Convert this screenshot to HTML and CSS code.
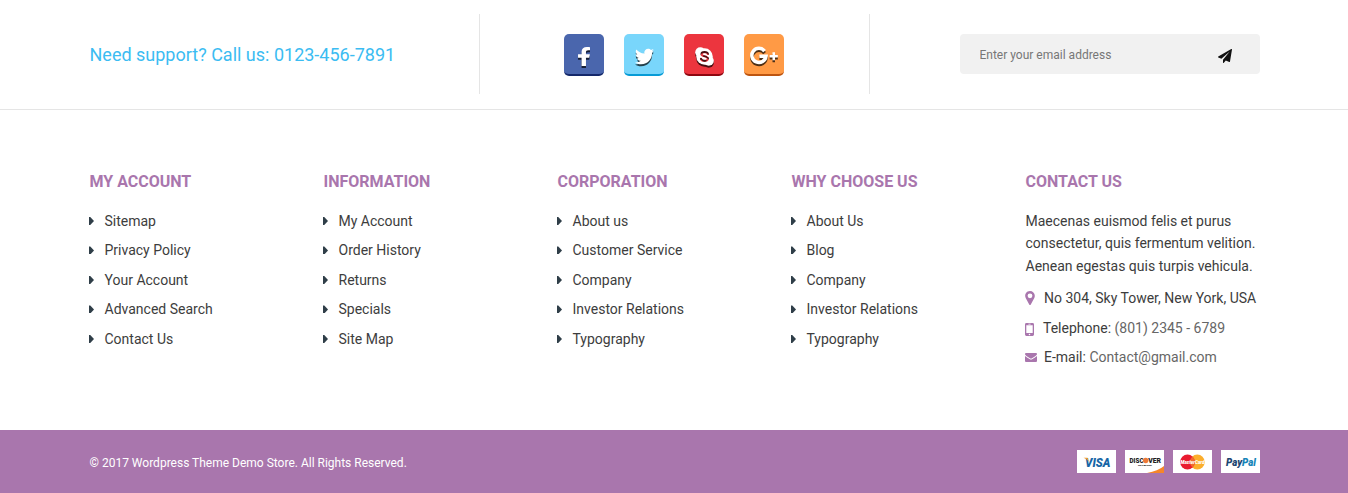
FILE: index.html
```html
<!DOCTYPE html>
<html lang="en">
<head>
<meta charset="utf-8">
<title>Demo Store</title>
<link rel="stylesheet" href="styles.css">
</head>
<body>
<footer>
  <section class="top">
    <div class="container top-row">
      <div class="support">Need support? Call us: 0123-456-7891</div>
      <div class="social">
        <a class="btn facebook"><svg width="12" height="19" viewBox="22 0 275 512" preserveAspectRatio="none"><path d="M279.14 288l14.22-92.66h-88.91v-60.13c0-25.35 12.42-50.06 52.24-50.06h40.42V6.26S260.43 0 225.36 0c-73.22 0-121.08 44.38-121.08 124.72v70.62H22.89V288h81.39v224h100.17V288z"/></svg></a>
        <a class="btn twitter"><svg width="19" height="19" viewBox="0 0 512 512"><path d="M459.37 151.716c.325 4.548.325 9.097.325 13.645 0 138.72-105.583 298.558-298.558 298.558-59.452 0-114.68-17.219-161.137-47.106 8.447.974 16.568 1.299 25.34 1.299 49.055 0 94.213-16.568 130.274-44.832-46.132-.975-84.792-31.188-98.112-72.772 6.498.974 12.995 1.624 19.818 1.624 9.421 0 18.843-1.3 27.614-3.573-48.081-9.747-84.143-51.98-84.143-102.985v-1.299c13.969 7.797 30.214 12.67 47.431 13.319-28.264-18.843-46.781-51.005-46.781-87.391 0-19.492 5.197-37.36 14.294-52.954 51.655 63.675 129.3 105.258 216.365 109.807-1.624-7.797-2.599-15.918-2.599-24.04 0-57.828 46.782-104.934 104.934-104.934 30.213 0 57.502 12.67 76.67 33.137 23.715-4.548 46.456-13.32 66.599-25.34-7.798 24.366-24.366 44.833-46.132 57.827 21.117-2.273 41.584-8.122 60.426-16.243-14.292 20.791-32.161 39.308-52.628 54.253z"/></svg></a>
        <a class="btn skype"><svg width="19" height="19" viewBox="0 0 18 18"><mask id="s"><path fill="#fff" d="M0 0h18v18H0z"/><path d="M12.2 6.600C11.600 4.300 6.200 4.200 6.200 6.900c0 2.400 6 1.400 6 4.100 0 3-6 2.700-6.500.2" fill="none" stroke="#000" stroke-width="2.100" stroke-linecap="round"/></mask><g mask="url(#s)"><circle cx="9" cy="9" r="7.800"/><circle cx="5" cy="5" r="4.800"/><circle cx="13" cy="13" r="4.800"/></g></svg></a>
        <a class="btn google"><svg width="29" height="18" viewBox="0 0 29 18"><path d="M14.600 4.100A7.100 7.100 0 1 0 16 9.200H9.400" fill="none" stroke="#fff" stroke-width="3.500"/><path d="M22.500 5.300h2.500v2.700h2.800v2.500h-2.800v2.700h-2.500v-2.700h-2.800V8h2.800z"/></svg></a>
      </div>
      <form class="newsletter"><input type="text" placeholder="Enter your email address" aria-label="Email"><svg width="14" height="14" viewBox="0 0 1792 1792"><path d="M1764 11q33 24 27 64l-256 1536q-5 29-32 45-14 8-31 8-11 0-24-5l-453-185-242 295q-18 23-49 23-13 0-22-4-19-7-30.500-23.500t-11.500-36.500v-349l864-1059-1069 925-395-162q-37-14-40-55-2-40 32-59l1664-960q15-9 32-9 20 0 36 11z"/></svg></form>
    </div>
  </section>
  <section class="container columns">
    <div><h3>My Account</h3><ul><li>Sitemap</li><li>Privacy Policy</li><li>Your Account</li><li>Advanced Search</li><li>Contact Us</li></ul></div>
    <div><h3>Information</h3><ul><li>My Account</li><li>Order History</li><li>Returns</li><li>Specials</li><li>Site Map</li></ul></div>
    <div><h3>Corporation</h3><ul><li>About us</li><li>Customer Service</li><li>Company</li><li>Investor Relations</li><li>Typography</li></ul></div>
    <div><h3>Why Choose Us</h3><ul><li>About Us</li><li>Blog</li><li>Company</li><li>Investor Relations</li><li>Typography</li></ul></div>
    <div class="contact"><h3>Contact Us</h3>
      <p>Maecenas euismod felis et purus<br>consectetur, quis fermentum velition.<br>Aenean egestas quis turpis vehicula.</p>
      <div class="line address"><svg width="10" height="14" viewBox="0 0 10 14"><path fill-rule="evenodd" d="M5 0a4.800 4.800 0 0 1 4.800 4.800c0 1-.2 1.600-.5 2.200L5.800 13.400q-.8 1-1.600 0L.7 7A4.800 4.800 0 0 1 5 0zm0 2.400a2.400 2.400 0 1 0 0 4.800 2.400 2.400 0 0 0 0-4.800z"/></svg><span>No 304, Sky Tower, New York, USA</span></div>
      <div class="line phone"><svg width="9" height="13" viewBox="0 0 9 13"><path fill-rule="evenodd" d="M1.400 0h6.200Q9 0 9 1.400v10.200Q9 13 7.600 13H1.400Q0 13 0 11.600V1.400Q0 0 1.400 0zM1.300 2.300v7.600h6.400V2.300zM3.400.8v.6h2.200V.8zM4.500 10.700a.8.8 0 1 0 0 1.600.8.8 0 0 0 0-1.600z"/></svg><span>Telephone: <em>(801) 2345 - 6789</em></span></div>
      <div class="line mail"><svg width="12" height="9" viewBox="0 0 12 9"><path d="M1 0h10q1 0 1 1c0 1-1.200 1.800-2.200 2.500L7 5.300q-1 .7-2 0L2.200 3.500C1.200 2.800 0 2 0 1Q0 0 1 0zM0 2.900Q2.500 4.800 4.500 6.100q1.500 1 3 0Q9.500 4.800 12 2.900V8q0 1-1 1H1Q0 9 0 8z"/></svg><span>E-mail: <em>Contact@gmail.com</em></span></div>
    </div>
  </section>
  <section class="bottom">
    <div class="container bottom-row">
      <span>© 2017 Wordpress Theme Demo Store. All Rights Reserved.</span>
      <div class="cards">
        <svg width="39" height="23" viewBox="0 0 39 23"><path fill="#fff" d="M0 0h39v23H0z"/><text class="visa" x="8" y="16.800" textLength="25.500" lengthAdjust="spacingAndGlyphs">VISA</text><path fill="#f6a02c" d="M6.500 7.700h4l1.600 4.200Q10 8.800 6.500 7.700z"/></svg>
        <svg width="39" height="23" viewBox="0 0 39 23"><path fill="#fff" d="M0 0h39v23H0z"/><path fill="#f5862a" d="M39 16v7H22q11-2 17-7z"/><text class="discover" x="4.500" y="13" textLength="14" lengthAdjust="spacingAndGlyphs">DISC</text><circle cx="20.700" cy="10.500" r="2.700" fill="#ee7a38"/><text class="discover" x="23.200" y="13" textLength="12.800" lengthAdjust="spacingAndGlyphs">VER</text><text class="network" x="13" y="16.200" textLength="14" lengthAdjust="spacingAndGlyphs">NETWORK</text></svg>
        <svg width="39" height="23" viewBox="0 0 39 23"><path fill="#fff" d="M0 0h39v23H0z"/><circle cx="24.300" cy="12" r="7.400" fill="#fbae2c"/><circle cx="14.500" cy="12" r="7.400" fill="#e91b30"/><path d="M19.400 6.500a7.400 7.400 0 0 1 0 11 7.400 7.400 0 0 1 0-11z" fill="#f26a2d"/><text class="master" x="7.500" y="14.200" textLength="24" lengthAdjust="spacingAndGlyphs">MasterCard</text></svg>
        <svg width="39" height="23" viewBox="0 0 39 23"><path fill="#fff" d="M0 0h39v23H0z"/><text class="paypal" x="5" y="15.800" textLength="30" lengthAdjust="spacingAndGlyphs"><tspan fill="#1c4670">Pay</tspan><tspan fill="#1685b8">Pal</tspan></text></svg>
      </div>
    </div>
  </section>
</footer>
</body>
</html>
```
FILE: styles.css
```css
* { box-sizing: border-box; }
body { margin: 0; background: #fff; color: #3d3d3d; font: 14px/22px Roboto, sans-serif; }
.container { width: 1170px; margin: 0 0 0 89.500px; }
.top { height: 110px; padding-top: 14px; border-bottom: 1px solid #e5e5e5; }
.top-row { display: grid; grid-template-columns: 390px 390px 390px; height: 80px; }
.support { display: flex; align-items: center; padding-top: 2px; border-right: 1px solid #e5e5e5; color: #3bbcf2; font-size: 18px; }
.social { display: flex; justify-content: center; gap: 20px; padding: 20px 0 0; border-right: 1px solid #e5e5e5; }
.btn { display: flex; align-items: center; justify-content: center; width: 40px; height: 42px; padding-top: 2px; border-radius: 5px; border-bottom: 2px solid; }
.btn svg { overflow: visible; fill: #fff; filter: drop-shadow(0 2px 0 rgba(0, 0, 0, .7)); }
.facebook { background: #4a66ad; border-color: #14286a; }
.facebook svg { margin-top: 3px; }
.twitter { background: #79d6fb; border-color: #079bd6; }
.twitter svg { margin-top: 3px; }
.skype { background: #ec353e; border-color: #8f0710; }
.skype svg { margin-top: 2px; }
.google { background: #ff9a45; border-color: #bd5510; }
.google svg { margin: 2px 0 0 1px; }
.newsletter { display: flex; align-items: center; justify-content: space-between; width: 300px; height: 40px; margin: 20px 0 0 auto; padding: 0 28px 0 20px; border-radius: 4px; background: #f1f1f1; }
.newsletter input { width: 190px; padding: 2px 0 0; border: 0; outline: 0; background: transparent; color: #777; font: 12px Roboto, sans-serif; }
.newsletter input::placeholder { color: #777; }
.newsletter svg { margin-top: 3px; fill: #111; }
.columns { display: grid; grid-template-columns: repeat(5, 234px); height: 320px; padding-top: 61px; }
h3 { margin: 0 0 16.700px; color: #a976ad; font-size: 16px; font-weight: 700; line-height: 22px; text-transform: uppercase; }
ul { margin: 0; padding: 0; list-style: none; }
li { display: flex; align-items: center; height: 29.500px; padding-bottom: 7px; }
li::before { content: ""; width: 5px; height: 8px; margin: 0 10.500px 0 -.5px; background: #2f3e48; clip-path: polygon(0 0, 25% 0, 100% 50%, 25% 100%, 0 100%); }
.contact p { margin: 0 0 10px; line-height: 22.400px; white-space: nowrap; }
.line { display: flex; align-items: center; height: 22px; margin-bottom: 7.500px; white-space: nowrap; }
.line svg { flex: none; fill: #a976ad; }
.line em { color: #666; font-style: normal; }
.address { margin-bottom: 8px; }
.phone { margin-bottom: 7px; }
.address svg { margin: 0 9px 0 -.5px; }
.phone svg { margin: 4px 9px 0 -.5px; }
.mail svg { margin: 2px 7px 0 -.5px; }
.bottom { height: 63px; background: #a976ad; color: #fff; font-size: 12px; }
.bottom-row { display: flex; align-items: center; justify-content: space-between; height: 63px; padding-top: 2px; }
.cards { display: flex; gap: 9px; padding-bottom: 3px; }
.cards text { font-family: Roboto, sans-serif; font-weight: 900; font-style: italic; }
.cards .visa { fill: #1766a6; font-size: 12.500px; }
.cards .discover { fill: #222; font-size: 7px; font-style: normal; }
.cards .network { fill: #333; font-size: 2.500px; font-style: normal; }
.cards .master { fill: #fff; font-size: 5.500px; }
.cards .paypal { font-size: 10.500px; }
```
